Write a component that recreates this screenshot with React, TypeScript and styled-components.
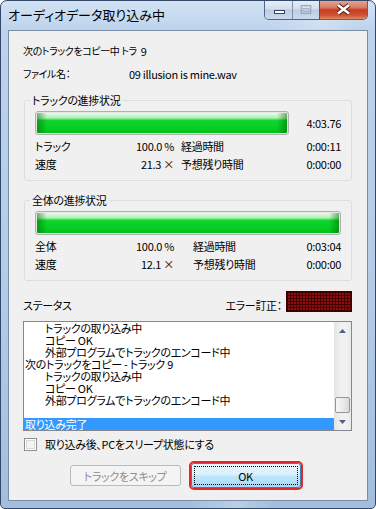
import React from 'react'
import styled, { createGlobalStyle } from 'styled-components'

const GlobalStyle = createGlobalStyle`
  html, body {
    margin: 0;
    padding: 0;
    background: #ffffff;
  }
  body {
    width: 376px;
    height: 509px;
    overflow: hidden;
    font-family: "Noto Sans CJK JP", "Liberation Sans", sans-serif;
    font-feature-settings: "palt";
  }
  * {
    box-sizing: border-box;
  }
`

const Window = styled.div`
  width: 376px;
  height: 509px;
  display: flex;
  flex-direction: column;
  border: 1px solid #34496a;
  border-radius: 7px 7px 5px 5px;
  overflow: hidden;
  background:
    linear-gradient(100deg, rgba(255, 255, 255, 0) 60%, rgba(255, 255, 255, 0.25) 70%, rgba(255, 255, 255, 0) 78%),
    linear-gradient(to bottom, #d2e2f4 0%, #bdd3ec 30px, #b3cbe6 60%, #a3bedd 100%);
`

const TitleBar = styled.div`
  height: 29px;
  display: flex;
  align-items: flex-start;
  flex-shrink: 0;
`

const Title = styled.div`
  padding-left: 7px;
  line-height: 28px;
  font-size: 13px;
  color: #000;
`

const Controls = styled.div`
  display: flex;
  margin-left: auto;
  margin-right: 7px;
  margin-top: -1px;
  border: 1px solid #4f6683;
  border-top: none;
  border-radius: 0 0 5px 5px;
  overflow: hidden;
`

const CtlButton = styled.div<{ $w: number; $close?: boolean }>`
  width: ${p => p.$w}px;
  height: 19px;
  display: flex;
  align-items: center;
  justify-content: center;
  border-left: ${p => (p.$close ? '1px solid #6a4a4a' : '1px solid #7d91aa')};
  &:first-child {
    border-left: none;
  }
  background: ${p =>
    p.$close
      ? 'linear-gradient(to bottom, #eaa998 0%, #d97a62 40%, #c53d22 52%, #cf5230 80%, #e28a63 100%)'
      : 'linear-gradient(to bottom, #e8eff8 0%, #d3dfee 45%, #bccde2 52%, #cbdaed 100%)'};
`

const Client = styled.div`
  flex: 1;
  margin: 0 7px 7px;
  border: 1px solid #7b8ea8;
  background: #f0f0f0;
  padding: 12px 15px 0 14px;
  display: flex;
  flex-direction: column;
  font-size: 11px;
  letter-spacing: -0.3px;
  color: #000;
`

const InfoRow = styled.div<{ $gap?: number }>`
  display: grid;
  grid-template-columns: minmax(102px, max-content) 1fr;
  column-gap: 4px;
  height: 16px;
  line-height: 16px;
  margin-top: ${p => p.$gap ?? 0}px;
  white-space: nowrap;
`

const InfoLabel = styled.span`
  font-size: 10px;
  letter-spacing: -0.4px;
`

const Group = styled.fieldset<{ $gap: number }>`
  margin: ${p => p.$gap}px 0 0 1px;
  border: 1px solid #d5dfe5;
  border-radius: 3px;
  padding: 0 10px 7px;
  min-width: 0;
`

const Legend = styled.legend`
  margin-left: -5px;
  padding: 0 2px;
  line-height: 16px;
  font-size: 11px;
`

const ProgressRow = styled.div`
  display: flex;
  align-items: center;
  margin-top: 3px;
  height: 24px;
`

const Bar = styled.div<{ $w: number }>`
  width: ${p => p.$w}px;
  height: 24px;
  border: 1px solid #b0b0b0;
  border-radius: 3px;
  padding: 1px;
  background: #e6e6e6;
`

const Fill = styled.div`
  height: 100%;
  border-radius: 1px;
  background:
    linear-gradient(to right, rgba(0, 100, 0, 0.5), rgba(0, 100, 0, 0) 10px, rgba(0, 100, 0, 0) calc(100% - 10px), rgba(0, 100, 0, 0.5)),
    linear-gradient(to bottom, #e6fde6 0%, #b2f0b6 24%, #0fd42c 38%, #05cf22 75%, #03c01c 100%);
`

const TimeText = styled.span`
  margin-left: auto;
`

const Stats = styled.div<{ $labelGap: number }>`
  display: grid;
  grid-template-columns: 70px 69px 1fr auto;
  line-height: 18px;
  margin-top: 2px;
  white-space: nowrap;
  & > span:nth-child(4n + 2) {
    text-align: right;
  }
  & > span:nth-child(4n + 3) {
    padding-left: ${p => p.$labelGap}px;
  }
  & > span:nth-child(4n + 4) {
    text-align: right;
  }
`

const StatusRow = styled.div`
  display: flex;
  align-items: flex-end;
  margin-top: 10px;
  height: 21px;
  line-height: 14px;
`

const ErrLabel = styled.span`
  margin-left: auto;
  margin-right: 4px;
`

const Led = styled.div`
  width: 66px;
  height: 21px;
  align-self: stretch;
  border: 1px solid #3c0000;
  background-color: #8e0f0f;
  background-image:
    linear-gradient(to right, #420000 1px, transparent 1px),
    linear-gradient(to bottom, #420000 1px, transparent 1px);
  background-size: 3px 3px;
`

const ListBox = styled.div`
  margin-top: 9px;
  height: 110px;
  border: 1px solid #828790;
  background: #fff;
  display: flex;
`

const Items = styled.div`
  flex: 1;
  display: flex;
  flex-direction: column;
  overflow: hidden;
`

const Item = styled.div<{ $indent?: boolean; $selected?: boolean }>`
  height: 12px;
  line-height: 12px;
  padding-left: ${p => (p.$indent ? 21 : 1)}px;
  white-space: nowrap;
  background: ${p => (p.$selected ? '#3399ff' : 'transparent')};
  color: ${p => (p.$selected ? '#fff' : '#000')};
`

const ScrollBar = styled.div`
  width: 17px;
  display: flex;
  flex-direction: column;
  background: linear-gradient(to right, #e3e3e3 0%, #eeeeee 30%, #f2f2f2 70%, #e8e8e8 100%);
`

const ArrowButton = styled.div`
  height: 17px;
  display: flex;
  align-items: center;
  justify-content: center;
`

const Track = styled.div`
  flex: 1;
  display: flex;
  flex-direction: column;
  justify-content: flex-end;
`

const Thumb = styled.div`
  height: 16px;
  margin: 0 1px;
  border: 1px solid #979797;
  border-radius: 2px;
  background: linear-gradient(to right, #f7f7f7 0%, #ececec 50%, #d8d8d8 100%);
`

const CheckRow = styled.div`
  display: flex;
  align-items: center;
  margin-top: 7px;
  height: 13px;
  line-height: 13px;
`

const CheckBox = styled.div`
  width: 13px;
  height: 13px;
  margin-left: 1px;
  margin-right: 8px;
  border: 1px solid #8e8f8f;
  background: #f4f4f4;
  box-shadow: inset 0 0 0 1px #fff, inset 0 0 0 2px #d8d8d8;
`

const ButtonRow = styled.div`
  display: flex;
  justify-content: center;
  align-items: center;
  gap: 10px;
  margin-top: 12px;
  padding-right: 5px;
  height: 25px;
`

const Button = styled.div<{ $primary?: boolean }>`
  position: relative;
  display: flex;
  align-items: center;
  justify-content: center;
  width: ${p => (p.$primary ? 110 : 111)}px;
  height: ${p => (p.$primary ? 25 : 21)}px;
  border-radius: 3px;
  font-size: 11px;
  border: 1px solid ${p => (p.$primary ? '#3c7fb1' : '#b5babd')};
  color: ${p => (p.$primary ? '#000' : '#8d8d8d')};
  background: ${p =>
    p.$primary
      ? 'linear-gradient(to bottom, #eaf6fd 0%, #d9f0fc 48%, #bee6fd 52%, #a7d9f5 100%)'
      : '#f4f4f4'};
  outline: ${p => (p.$primary ? '2px solid #e2262b' : 'none')};
  &::after {
    content: '';
    display: ${p => (p.$primary ? 'block' : 'none')};
    position: absolute;
    inset: 2px;
    border: 1px dotted #000;
  }
`

const lines: { text: string; indent?: boolean; selected?: boolean }[] = [
  { text: 'トラックの取り込み中', indent: true },
  { text: 'コピー OK', indent: true },
  { text: '外部プログラムでトラックのエンコード中', indent: true },
  { text: '次のトラックをコピー - トラック  9' },
  { text: 'トラックの取り込み中', indent: true },
  { text: 'コピー OK', indent: true },
  { text: '外部プログラムでトラックのエンコード中', indent: true },
  { text: '' },
  { text: '取り込み完了', selected: true },
]

interface Stat {
  label: string
  value: string
  label2: string
  value2: string
}

const ProgressGroup: React.FC<{
  title: string
  gap: number
  barWidth: number
  time?: string
  labelGap: number
  stats: Stat[]
}> = ({ title, gap, barWidth, time, labelGap, stats }) => (
  <Group $gap={gap}>
    <Legend>{title}</Legend>
    <ProgressRow>
      <Bar $w={barWidth}>
        <Fill />
      </Bar>
      {time && <TimeText>{time}</TimeText>}
    </ProgressRow>
    <Stats $labelGap={labelGap}>
      {stats.map(s => (
        <React.Fragment key={s.label}>
          <span>{s.label}</span>
          <span>{s.value}</span>
          <span>{s.label2}</span>
          <span>{s.value2}</span>
        </React.Fragment>
      ))}
    </Stats>
  </Group>
)

const App: React.FC = () => (
  <>
    <GlobalStyle />
    <Window>
      <TitleBar>
        <Title>オーディオデータ取り込み中</Title>
        <Controls>
          <CtlButton $w={27}>
            <svg width="27" height="19" viewBox="0 0 27 19">
              <rect x="9.5" y="10.5" width="10" height="3" fill="#fff" stroke="#2f4560" />
            </svg>
          </CtlButton>
          <CtlButton $w={27}>
            <svg width="27" height="19" viewBox="0 0 27 19">
              <rect x="8.5" y="5.5" width="10" height="8" fill="none" stroke="#8a9bb3" />
              <rect x="10.5" y="8.5" width="6" height="3" fill="none" stroke="#9fb0c6" />
            </svg>
          </CtlButton>
          <CtlButton $w={48} $close>
            <svg width="47" height="19" viewBox="0 0 47 19">
              <path d="M18 5 L29 13.5 M29 5 L18 13.5" stroke="#4a1d14" strokeWidth="4.6" />
              <path d="M18 5 L29 13.5 M29 5 L18 13.5" stroke="#ffffff" strokeWidth="2.6" />
            </svg>
          </CtlButton>
        </Controls>
      </TitleBar>
      <Client>
        <InfoRow>
          <InfoLabel>次のトラックをコピー中 トラ</InfoLabel>
          <span>9</span>
        </InfoRow>
        <InfoRow $gap={7}>
          <InfoLabel>ファイル名：</InfoLabel>
          <span>09 illusion is mine.wav</span>
        </InfoRow>
        <ProgressGroup
          title="トラックの進捗状況"
          gap={10}
          barWidth={254}
          time="4:03.76"
          labelGap={7}
          stats={[
            { label: 'トラック', value: '100.0 %', label2: '経過時間', value2: '0:00:11' },
            { label: '速度', value: '21.3 ×', label2: '予想残り時間', value2: '0:00:00' },
          ]}
        />
        <ProgressGroup
          title="全体の進捗状況"
          gap={11}
          barWidth={306}
          labelGap={19}
          stats={[
            { label: '全体', value: '100.0 %', label2: '経過時間', value2: '0:03:04' },
            { label: '速度', value: '12.1 ×', label2: '予想残り時間', value2: '0:00:00' },
          ]}
        />
        <StatusRow>
          <span>ステータス</span>
          <ErrLabel>エラー訂正：</ErrLabel>
          <Led />
        </StatusRow>
        <ListBox>
          <Items>
            {lines.map((l, i) => (
              <Item key={i} $indent={l.indent} $selected={l.selected}>
                {l.text}
              </Item>
            ))}
          </Items>
          <ScrollBar>
            <ArrowButton>
              <svg width="7" height="4" viewBox="0 0 7 4">
                <path d="M0 4 L3.5 0 L7 4 Z" fill="#4d6185" />
              </svg>
            </ArrowButton>
            <Track>
              <Thumb />
            </Track>
            <ArrowButton>
              <svg width="7" height="4" viewBox="0 0 7 4">
                <path d="M0 0 L7 0 L3.5 4 Z" fill="#4d6185" />
              </svg>
            </ArrowButton>
          </ScrollBar>
        </ListBox>
        <CheckRow>
          <CheckBox />
          <span>取り込み後、PCをスリープ状態にする</span>
        </CheckRow>
        <ButtonRow>
          <Button>トラックをスキップ</Button>
          <Button $primary>OK</Button>
        </ButtonRow>
      </Client>
    </Window>
  </>
)

export default App
